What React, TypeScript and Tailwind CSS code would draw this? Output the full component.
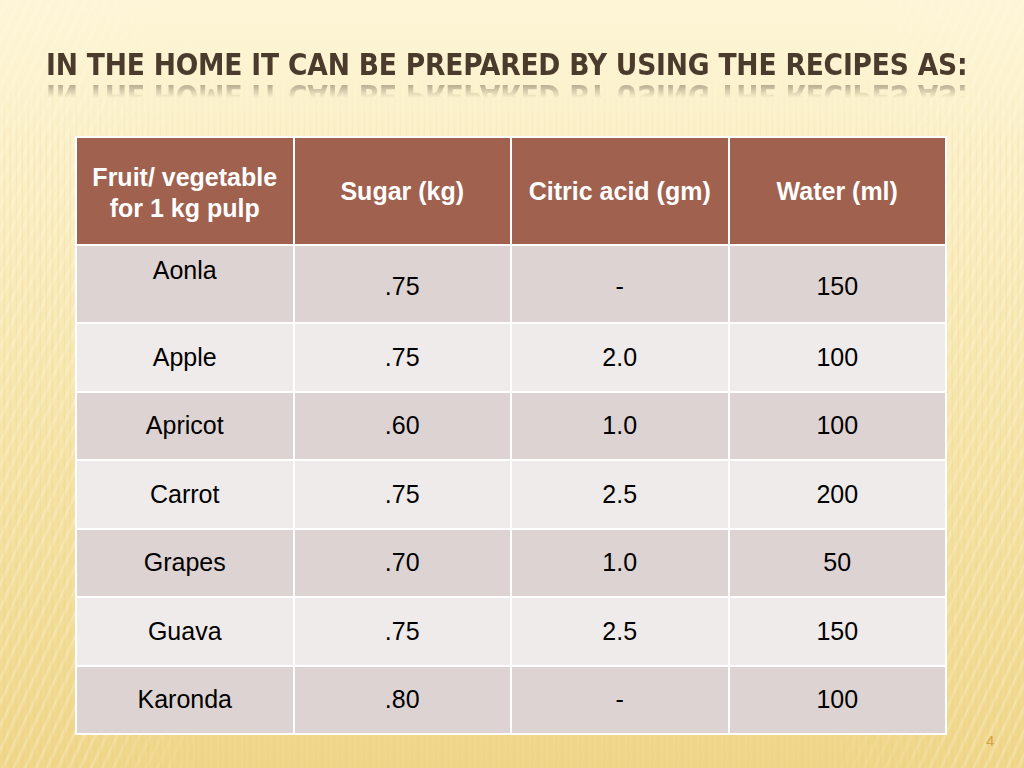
import React from "react";

const rows: [string, string, string, string][] = [
  ["Apple", ".75", "2.0", "100"],
  ["Apricot", ".60", "1.0", "100"],
  ["Carrot", ".75", "2.5", "200"],
  ["Grapes", ".70", "1.0", "50"],
  ["Guava", ".75", "2.5", "150"],
  ["Karonda", ".80", "-", "100"],
];

const title = "IN THE HOME IT CAN BE PREPARED BY USING THE RECIPES AS:";

export default function App() {
  return (
    <div className="relative w-[1024px] h-[768px] overflow-hidden bg-[linear-gradient(180deg,#fdf5d6_0%,#fbefc6_25%,#f5e3a6_60%,#efd68a_100%)] font-['Liberation_Sans',Arial,sans-serif]">
      <div className="absolute inset-0 opacity-60 bg-[repeating-linear-gradient(115deg,rgba(255,255,255,0.0)_0px,rgba(255,255,255,0.0)_5px,rgba(255,250,225,0.55)_7px,rgba(255,255,255,0)_10px)] [mask-image:linear-gradient(90deg,black_0%,black_8%,transparent_20%,transparent_80%,black_95%)]" />
      <div className="absolute inset-0 opacity-40 bg-[repeating-linear-gradient(90deg,rgba(225,195,110,0)_0px,rgba(225,195,110,0)_3px,rgba(225,195,110,0.5)_4px,rgba(225,195,110,0)_6px)] [mask-image:linear-gradient(180deg,transparent_10%,black_20%,black_100%)]" />
      <div className="relative flex flex-col">
        <div className="relative pl-[46px] pt-[44px] h-[136px]">
          <div className="origin-left scale-x-[0.952] text-[31px] leading-[40px] font-bold text-[#4a3b2c] tracking-[-0.2px] font-['DejaVu_Sans_Condensed',sans-serif] whitespace-nowrap">
            {title}
          </div>
          <div
            aria-hidden
            className="absolute left-[46px] top-[76px] origin-left scale-x-[0.952] scale-y-[-1] text-[31px] leading-[40px] font-bold text-[#4a3b2c] tracking-[-0.2px] font-['DejaVu_Sans_Condensed',sans-serif] whitespace-nowrap opacity-40 [mask-image:linear-gradient(0deg,black_20%,transparent_55%)]"
          >
            {title}
          </div>
        </div>
        <div className="ml-[75px] w-[872px] border-2 border-white bg-white flex flex-col gap-[2px]">
          <div className="grid grid-cols-4 gap-[2px] h-[106px]">
            <div className="bg-[#a0614f] text-white font-bold text-[25px] leading-[31px] flex items-center justify-center text-center pt-[4px]">
              Fruit/ vegetable
              <br />
              for 1 kg pulp
            </div>
            {["Sugar (kg)", "Citric acid (gm)", "Water (ml)"].map((h) => (
              <div key={h} className="bg-[#a0614f] text-white font-bold text-[25px] flex items-center justify-center pt-[2px]">
                {h}
              </div>
            ))}
          </div>
          <div className="grid grid-cols-4 gap-[2px] h-[76px] text-[25px] text-black">
            <div className="bg-[#ddd3d2] flex justify-center pt-[6px]">Aonla</div>
            {[".75", "-", "150"].map((v, i) => (
              <div key={i} className="bg-[#ddd3d2] flex items-center justify-center pt-[5px]">
                {v}
              </div>
            ))}
          </div>
          {rows.map((r, ri) => (
            <div key={r[0]} className="grid grid-cols-4 gap-[2px] h-[66.5px] text-[25px] text-black">
              {r.map((v, i) => (
                <div
                  key={i}
                  className={`${ri % 2 === 0 ? "bg-[#eeebea]" : "bg-[#ddd3d2]"} flex items-center justify-center`}
                >
                  {v}
                </div>
              ))}
            </div>
          ))}
        </div>
      </div>
      <div className="absolute left-[986px] top-[730px] text-[15px] text-[#d2a444] font-['Liberation_Sans',sans-serif]">
        4
      </div>
    </div>
  );
}
